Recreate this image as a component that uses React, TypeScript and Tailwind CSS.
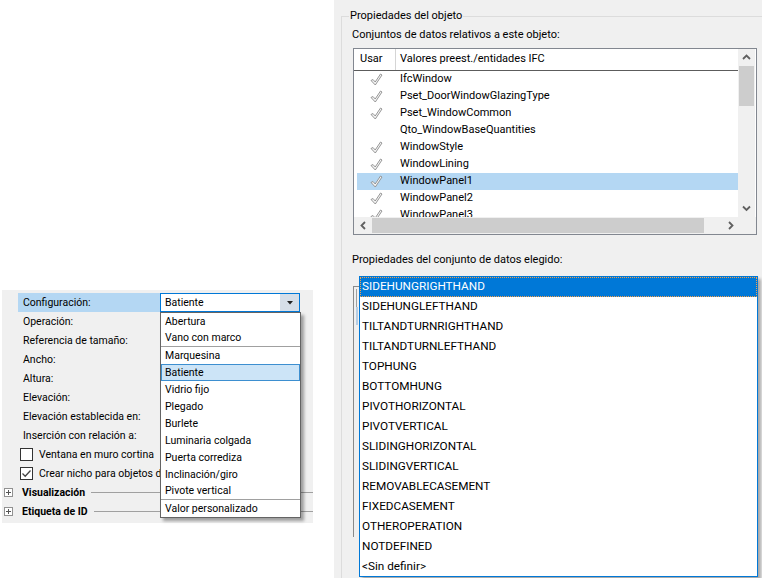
import React from 'react'

const FONT = "font-['Roboto','Liberation_Sans',Arial,sans-serif]"

const listRows = [
  { name: 'IfcWindow', check: true },
  { name: 'Pset_DoorWindowGlazingType', check: true },
  { name: 'Pset_WindowCommon', check: true },
  { name: 'Qto_WindowBaseQuantities', check: false },
  { name: 'WindowStyle', check: true },
  { name: 'WindowLining', check: true },
  { name: 'WindowPanel1', check: true, selected: true },
  { name: 'WindowPanel2', check: true },
  { name: 'WindowPanel3', check: true },
]

const operations = [
  'SIDEHUNGRIGHTHAND',
  'SIDEHUNGLEFTHAND',
  'TILTANDTURNRIGHTHAND',
  'TILTANDTURNLEFTHAND',
  'TOPHUNG',
  'BOTTOMHUNG',
  'PIVOTHORIZONTAL',
  'PIVOTVERTICAL',
  'SLIDINGHORIZONTAL',
  'SLIDINGVERTICAL',
  'REMOVABLECASEMENT',
  'FIXEDCASEMENT',
  'OTHEROPERATION',
  'NOTDEFINED',
  '<Sin definir>',
]

const configs = [
  { label: 'Abertura' },
  { label: 'Vano con marco', sep: true },
  { label: 'Marquesina' },
  { label: 'Batiente', selected: true },
  { label: 'Vidrio fijo' },
  { label: 'Plegado' },
  { label: 'Burlete' },
  { label: 'Luminaria colgada' },
  { label: 'Puerta corrediza' },
  { label: 'Inclinación/giro' },
  { label: 'Pivote vertical', sep: true },
  { label: 'Valor personalizado' },
]

const labels = [
  'Operación:',
  'Referencia de tamaño:',
  'Ancho:',
  'Altura:',
  'Elevación:',
  'Elevación establecida en:',
  'Inserción con relación a:',
]

function CheckGlyph() {
  return (
    <svg width="13" height="13" viewBox="0 0 13 13">
      <path d="M1 7.5 L3 6.5 L5.2 9 L10.5 1 L12 2 L5.3 12 Z" fill="#f4f4f4" stroke="#8c8c8c" strokeWidth="0.9" strokeLinejoin="round" />
    </svg>
  )
}

function Chevron({ dir }: { dir: 'up' | 'down' | 'left' | 'right' }) {
  const pts = {
    up: '1,5 4.5,1.5 8,5',
    down: '1,1.5 4.5,5 8,1.5',
    left: '5,1 1.5,4.5 5,8',
    right: '2,1 5.5,4.5 2,8',
  }[dir]
  const size = dir === 'up' || dir === 'down' ? { w: 9, h: 7 } : { w: 7, h: 9 }
  return (
    <svg width={size.w} height={size.h} viewBox={`0 0 ${size.w} ${size.h}`}>
      <polyline points={pts} fill="none" stroke="#606060" strokeWidth="1.8" />
    </svg>
  )
}

function ExpandBox() {
  return (
    <div className="w-[9px] h-[9px] border border-[#919191] bg-white flex items-center justify-center shrink-0">
      <svg width="7" height="7" viewBox="0 0 7 7">
        <path d="M1 3.5 H6 M3.5 1 V6" stroke="#555" strokeWidth="1" />
      </svg>
    </div>
  )
}

function LeftPanel() {
  return (
    <div className="ml-[2px] h-[233px] bg-[#f0f0f0] pt-[3px] flex flex-col text-[10.5px] text-black">
      {/* Configuración row */}
      <div className="h-[19px] flex items-stretch">
        <div className="ml-[16px] w-[142px] bg-[#b4d7f3] flex items-center pl-[5px]">Configuración:</div>
        <div className="w-[140px] border border-[#0078d7] bg-white flex items-center justify-between pl-[4px]">
          <span>Batiente</span>
          <div className="w-[19px] h-full bg-[#d6dee8] flex items-center justify-center">
            <svg width="6" height="4" viewBox="0 0 6 4"><path d="M0 0 H6 L3 3.5 Z" fill="#222" /></svg>
          </div>
        </div>
      </div>

      {labels.map((l) => (
        <div key={l} className="h-[19px] flex items-center pl-[21px] whitespace-nowrap">{l}</div>
      ))}

      <div className="h-[19px] flex items-center pl-[18px] gap-[6px] whitespace-nowrap">
        <div className="w-[13px] h-[13px] border border-[#333] bg-white shrink-0" />
        <span>Ventana en muro cortina</span>
      </div>
      <div className="h-[19px] w-[158px] flex items-center pl-[18px] gap-[6px] whitespace-nowrap overflow-hidden">
        <div className="w-[13px] h-[13px] border border-[#333] bg-white shrink-0 flex items-center justify-center">
          <svg width="11" height="11" viewBox="0 0 11 11"><polyline points="1.5,5.5 4.2,8.2 9.5,2.5" fill="none" stroke="#444" strokeWidth="1.3" /></svg>
        </div>
        <span>Crear nicho para objetos de apertura</span>
      </div>

      {['Visualización', 'Etiqueta de ID'].map((c) => (
        <div key={c} className="h-[19px] flex items-center pl-[2px] whitespace-nowrap">
          <ExpandBox />
          <span className="ml-[9px] font-bold">{c}</span>
          <div className="ml-[6px] flex-1 h-px bg-[#a0a0a0]" />
        </div>
      ))}
    </div>
  )
}

function ConfigPopup() {
  return (
    <div className="absolute left-[160px] top-[312px] w-[141px] h-[206px] bg-white border border-[#646464] shadow-[3px_3px_3px_rgba(0,0,0,0.35)] text-[10.5px] text-black">
      {configs.map((c) => (
        <div
          key={c.label}
          className={
            'h-[17px] flex items-center whitespace-nowrap ' +
            (c.selected ? 'bg-[#cce4f7] border border-[#3d8fd0] pl-[3px] ' : 'pl-[4px] ') +
            (c.sep ? 'border-b border-[#a0a0a0]' : '')
          }
        >
          {c.label}
        </div>
      ))}
    </div>
  )
}

function DataSetList() {
  return (
    <div className="ml-[1px] mt-[6px] w-[404px] h-[187px] border border-[#828790] bg-white flex flex-col">
      <div className="flex h-[168px]">
        <div className="w-[384px] flex flex-col overflow-hidden">
          <div className="h-[22px] shrink-0 flex border-b border-[#5c5c5c] bg-white">
            <div className="w-[42px] border-r border-[#d5d5d5] flex items-center pl-[6px]">Usar</div>
            <div className="flex items-center pl-[4px]">Valores preest./entidades IFC</div>
          </div>
          <div className="pl-[3px] flex flex-col">
            {listRows.map((r) => (
              <div key={r.name} className={'h-[17px] shrink-0 flex items-center ' + (r.selected ? 'bg-[#b4d7f3]' : '')}>
                <div className="w-[39px] pl-[13px] flex items-center">{r.check && <CheckGlyph />}</div>
                <span className="pl-[4px] whitespace-nowrap">{r.name}</span>
              </div>
            ))}
          </div>
        </div>
        <div className="w-[17px] bg-[#f0f0f0] flex flex-col items-center">
          <div className="h-[17px] flex items-center justify-center"><Chevron dir="up" /></div>
          <div className="w-[15px] h-[40px] bg-[#cdcdcd]" />
          <div className="flex-1" />
          <div className="h-[17px] flex items-center justify-center"><Chevron dir="down" /></div>
        </div>
      </div>
      <div className="flex h-[17px] bg-[#f0f0f0]">
        <div className="w-[18px] flex items-center justify-center"><Chevron dir="left" /></div>
        <div className="w-[332px] my-[1px] bg-[#cdcdcd]" />
        <div className="flex-1" />
        <div className="w-[17px] flex items-center justify-center"><Chevron dir="right" /></div>
        <div className="w-[17px]" />
      </div>
    </div>
  )
}

function OperationPopup() {
  return (
    <div className="absolute left-[359px] top-[276px] w-[399px] h-[301px] bg-white border border-[#0078d7] shadow-[3px_3px_3px_rgba(0,0,0,0.3)] text-[11.75px] text-black">
      {operations.map((o, i) => (
        <div
          key={o}
          className={
            'h-[20px] flex items-center whitespace-nowrap ' +
            (i === 0 ? 'bg-[#0078d7] text-white border border-dotted border-[#f5a04a] pl-[1px]' : 'pl-[2px]')
          }
        >
          {o}
        </div>
      ))}
    </div>
  )
}

export default function App() {
  return (
    <div className={`relative w-[762px] h-[578px] overflow-hidden bg-white flex ${FONT}`}>
      <div className="w-[313px] shrink-0 flex flex-col">
        <div className="h-[290px] shrink-0" />
        <LeftPanel />
      </div>
      <div className="w-[21px] shrink-0" />
      <div className="flex-1 bg-[#f0f0f0] pl-[7px] pt-[9px] text-[11px] text-black">
        <fieldset className="h-[600px] border-t border-l border-[#dcdcdc] p-0 m-0">
          <legend className="ml-[7px] px-[1px] leading-[14px]">Propiedades del objeto</legend>
          <div className="pl-[10px] flex flex-col">
            <div className="mt-[5px] leading-[14px]">Conjuntos de datos relativos a este objeto:</div>
            <DataSetList />
            <div className="mt-[18px] leading-[14px]">Propiedades del conjunto de datos elegido:</div>
            <div className="relative ml-[1px] mt-[19px] w-[10px] h-[251px] border-t border-l border-[#8a8a8a]">
              <div className="absolute left-[2px] top-[2px] w-px h-[18px] bg-[#a0a0a0]" />
              <div className="absolute left-[2px] top-[20px] w-[2px] h-[18px] bg-[#b7cde3]" />
            </div>
          </div>
        </fieldset>
      </div>
      <ConfigPopup />
      <OperationPopup />
    </div>
  )
}
